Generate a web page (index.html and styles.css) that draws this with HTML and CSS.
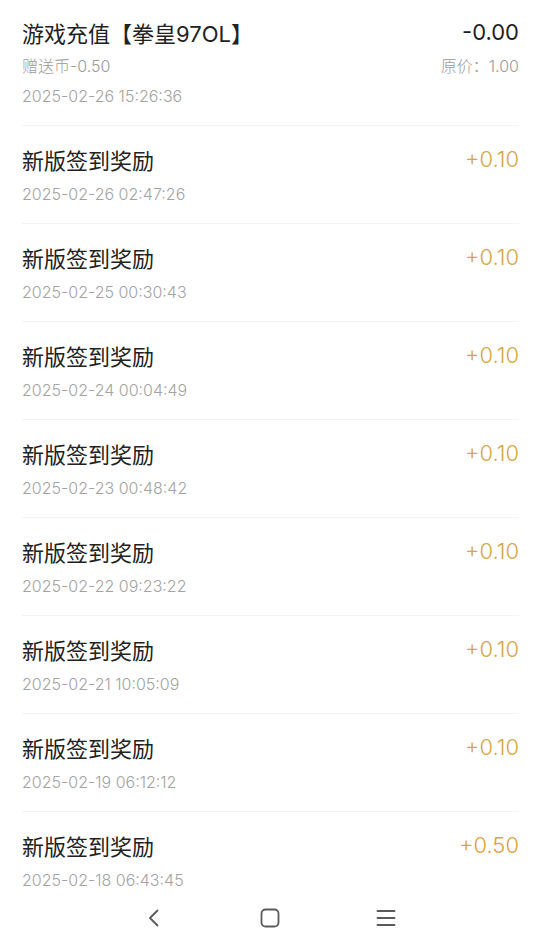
FILE: index.html
```html
<!DOCTYPE html>
<html lang="zh-CN">
<head>
<meta charset="utf-8">
<link rel="stylesheet" href="styles.css">
</head>
<body>
<div class="screen">
  <main class="list">
    <div class="row row-first">
      <div class="line">
        <span class="title">游戏充值【拳皇97OL】</span>
        <span class="amount neg">-0.00</span>
      </div>
      <div class="line sub">
        <span>赠送币-0.50</span>
        <span>原价：1.00</span>
      </div>
      <div class="date">2025-02-26 15:26:36</div>
    </div>
    <div class="row">
      <div class="line"><span class="title">新版签到奖励</span><span class="amount pos">+0.10</span></div>
      <div class="date">2025-02-26 02:47:26</div>
    </div>
    <div class="row">
      <div class="line"><span class="title">新版签到奖励</span><span class="amount pos">+0.10</span></div>
      <div class="date">2025-02-25 00:30:43</div>
    </div>
    <div class="row">
      <div class="line"><span class="title">新版签到奖励</span><span class="amount pos">+0.10</span></div>
      <div class="date">2025-02-24 00:04:49</div>
    </div>
    <div class="row">
      <div class="line"><span class="title">新版签到奖励</span><span class="amount pos">+0.10</span></div>
      <div class="date">2025-02-23 00:48:42</div>
    </div>
    <div class="row">
      <div class="line"><span class="title">新版签到奖励</span><span class="amount pos">+0.10</span></div>
      <div class="date">2025-02-22 09:23:22</div>
    </div>
    <div class="row">
      <div class="line"><span class="title">新版签到奖励</span><span class="amount pos">+0.10</span></div>
      <div class="date">2025-02-21 10:05:09</div>
    </div>
    <div class="row">
      <div class="line"><span class="title">新版签到奖励</span><span class="amount pos">+0.10</span></div>
      <div class="date">2025-02-19 06:12:12</div>
    </div>
    <div class="row">
      <div class="line"><span class="title">新版签到奖励</span><span class="amount pos strong">+0.50</span></div>
      <div class="date">2025-02-18 06:43:45</div>
    </div>
  </main>
  <nav class="navbar">
    <svg class="nav-icon" width="24" height="24" viewBox="0 0 24 24"><path d="M15.5 4.5 L8 12 L15.5 19.5" fill="none" stroke="#5a5a5a" stroke-width="1.8" stroke-linecap="round" stroke-linejoin="round"/></svg>
    <svg class="nav-icon" width="24" height="24" viewBox="0 0 24 24"><rect x="3.5" y="3.5" width="17" height="17" rx="4" fill="none" stroke="#5a5a5a" stroke-width="1.8"/></svg>
    <svg class="nav-icon" width="24" height="24" viewBox="0 0 24 24"><path d="M3.5 5 H20.5 M3.5 12 H20.5 M3.5 19 H20.5" fill="none" stroke="#5a5a5a" stroke-width="1.8" stroke-linecap="round"/></svg>
  </nav>
</div>
</body>
</html>
```

FILE: styles.css
```css
html, body {
  margin: 0;
  padding: 0;
  background: #fff;
}
body {
  font-family: Inter, "Noto Sans CJK SC", sans-serif;
  color: #222;
}
.screen {
  width: 540px;
  height: 952px;
  display: flex;
  flex-direction: column;
  overflow: hidden;
}
.list {
  flex: 1;
  overflow: hidden;
  padding: 0 21px 0 22px;
}
.row {
  height: 98px;
  box-sizing: border-box;
  border-bottom: 1px solid #f3f3f3;
  padding-top: 14px;
}
.row .date {
  margin-top: 7px;
}
.row-first {
  height: 126px;
  padding-top: 13px;
}
.row-first .date {
  margin-top: 6px;
}
.line {
  display: flex;
  justify-content: space-between;
  align-items: center;
  height: 37px;
}
.title {
  font-size: 22px;
  color: #222;
}
.amount {
  font-size: 22px;
  font-weight: 300;
}
.neg { color: #1e1e1e; font-weight: 400; }
.pos { color: #d6a748; }
.strong { color: #e3a040; }
.sub {
  height: 30px;
  font-size: 16px;
  color: #9a9a9a;
  font-weight: 300;
}
.date {
  font-size: 16px;
  color: #a3a3a3;
  line-height: 20px;
  font-weight: 300;
}
.navbar {
  height: 60px;
  box-sizing: border-box;
  padding-bottom: 8px;
  flex: none;
  display: flex;
  justify-content: center;
  align-items: center;
  gap: 92px;
}
.nav-icon {
  display: block;
}
```
